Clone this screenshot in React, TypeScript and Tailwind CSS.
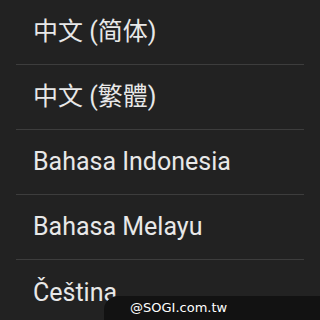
import React from "react";

const languages = ["中文 (简体)", "中文 (繁體)", "Bahasa Indonesia", "Bahasa Melayu", "Čeština"];

const App: React.FC = () => {
  return (
    <div className="relative w-[320px] h-[320px] overflow-hidden bg-[#222222]">
      <ul className="flex flex-col">
        {languages.map((lang, i) => (
          <li key={lang} className="px-4">
            <div
              className={`h-[65px] flex items-center pl-[17px] text-[25px] text-[#e8e8e8] ${
                i < languages.length - 1 ? "border-b border-[#3d3d3d]" : ""
              }`}
              style={{ fontFamily: 'Roboto, "Noto Sans CJK SC", sans-serif' }}
            >
              {lang}
            </div>
          </li>
        ))}
      </ul>

      {/* watermark */}
      <div className="absolute left-[104px] right-0 bottom-0 h-[24px] rounded-tl-[14px] bg-[#121212] flex items-center pl-[26px]">
        <span className="text-[13px] text-white" style={{ fontFamily: '"DejaVu Sans", sans-serif' }}>
          @SOGI.com.tw
        </span>
      </div>
    </div>
  );
};

export default App;
